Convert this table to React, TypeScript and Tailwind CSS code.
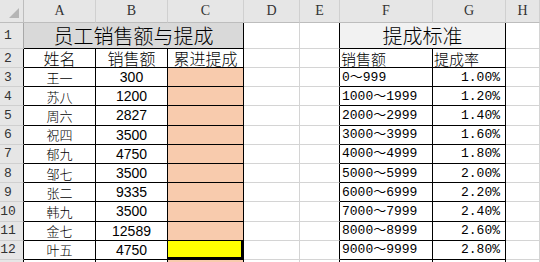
import React from 'react';

const rows = [
  { name: '王一', sales: '300', range: '0～999', rate: '1.00%' },
  { name: '苏八', sales: '1200', range: '1000～1999', rate: '1.20%' },
  { name: '周六', sales: '2827', range: '2000～2999', rate: '1.40%' },
  { name: '祝四', sales: '3500', range: '3000～3999', rate: '1.60%' },
  { name: '郁九', sales: '4750', range: '4000～4999', rate: '1.80%' },
  { name: '邹七', sales: '3500', range: '5000～5999', rate: '2.00%' },
  { name: '张二', sales: '9335', range: '6000～6999', rate: '2.20%' },
  { name: '韩九', sales: '3500', range: '7000～7999', rate: '2.40%' },
  { name: '金七', sales: '12589', range: '8000～8999', rate: '2.60%' },
  { name: '叶五', sales: '4750', range: '9000～9999', rate: '2.80%' },
];

const cjk = "font-['Noto_Sans_CJK_SC',sans-serif] font-light";
const mono = "font-['Liberation_Mono','Noto_Sans_CJK_SC',monospace]";
const sans = "font-['Liberation_Sans','Noto_Sans_CJK_SC',sans-serif]";

function Cell({ className = '', children }: { className?: string; children?: React.ReactNode }) {
  return (
    <div className={`flex items-center overflow-hidden whitespace-nowrap leading-none border-b border-r ${className}`}>
      {children}
    </div>
  );
}

function RowHead({ n, dark = true }: { n: number; dark?: boolean }) {
  return (
    <Cell
      className={`bg-[#e6e6e6] border-b-[#d0d0d0] ${dark ? 'border-r-black' : 'border-r-[#a8a8a8]'} justify-center pr-[7px] ${mono} text-[13px] text-[#333]`}
    >
      {n}
    </Cell>
  );
}

function ColHead({ label }: { label: string }) {
  return (
    <Cell className={`bg-[#e6e6e6] border-b-[#bdbdbd] border-r-[#d0d0d0] justify-center font-['Liberation_Serif',serif] text-[14px] text-[#333]`}>
      {label}
    </Cell>
  );
}

export default function App() {
  return (
    <div className="h-[262px] w-[540px] overflow-hidden bg-white text-black">
      <div className="grid grid-cols-[24px_72px_72px_76px_56px_40px_93px_73px_1fr] grid-rows-[23px_26px_19px_repeat(10,19.2px)_20px]">
        {/* column headers */}
        <Cell className="bg-[#e6e6e6] border-b-[#bdbdbd] border-r-[#bdbdbd]">
          <svg width="23" height="22" viewBox="0 0 23 22">
            <polygon points="19,8 19,18 9,18" fill="#b5b5b5" />
          </svg>
        </Cell>
        {['A', 'B', 'C', 'D', 'E', 'F', 'G', 'H'].map((c) => (
          <ColHead key={c} label={c} />
        ))}

        {/* row 1 */}
        <RowHead n={1} dark={false} />
        <Cell className={`col-span-3 justify-center bg-[#d9d9d9] border-b-black border-r-black ${cjk} text-[20px]`}>
          员工销售额与提成
        </Cell>
        <Cell className="border-[#d4d4d4]" />
        <Cell className="border-b-[#d4d4d4] border-r-black" />
        <Cell className={`col-span-2 justify-center bg-[#f2f2f2] border-black ${cjk} text-[20px]`}>提成标准</Cell>
        <Cell className="border-[#d4d4d4]" />

        {/* row 2 */}
        <RowHead n={2} />
        <Cell className={`justify-center border-black ${cjk} text-[16px]`}>姓名</Cell>
        <Cell className={`justify-center border-black ${cjk} text-[16px]`}>销售额</Cell>
        <Cell className={`justify-center border-black ${cjk} text-[16px]`}>累进提成</Cell>
        <Cell className="border-[#d4d4d4]" />
        <Cell className="border-b-[#d4d4d4] border-r-black" />
        <Cell className={`border-black pl-px ${cjk} text-[15px]`}>销售额</Cell>
        <Cell className={`border-black pl-px ${cjk} text-[15px]`}>提成率</Cell>
        <Cell className="border-[#d4d4d4]" />

        {/* data rows */}
        {rows.map((r, i) => (
          <React.Fragment key={r.name}>
            <RowHead n={i + 3} />
            <Cell className={`justify-center border-black ${cjk} text-[13px]`}>{r.name}</Cell>
            <Cell className={`justify-center border-black ${sans} text-[14px]`}>{r.sales}</Cell>
            {i === rows.length - 1 ? (
              <Cell className="relative bg-[#ffff00] border-black">
                <div className="absolute -left-[2px] -top-[2px] right-0 bottom-0 border-2 border-black" />
              </Cell>
            ) : (
              <Cell className="bg-[#f8cbad] border-black" />
            )}
            <Cell className="border-[#d4d4d4]" />
            <Cell className="border-b-[#d4d4d4] border-r-black" />
            <Cell className={`border-black pl-[2px] ${mono} text-[13px]`}>{r.range}</Cell>
            <Cell className={`justify-end border-black pr-[5px] ${mono} text-[13px]`}>{r.rate}</Cell>
            <Cell className="border-[#d4d4d4]" />
          </React.Fragment>
        ))}

        {/* row 13, mostly cut off */}
        <RowHead n={13} />
        <Cell className="border-black" />
        <Cell className="border-black" />
        <Cell className="bg-[#f8cbad] border-black" />
        <Cell className="border-[#d4d4d4]" />
        <Cell className="border-b-[#d4d4d4] border-r-black" />
        <Cell className="border-black" />
        <Cell className="border-black" />
        <Cell className="border-[#d4d4d4]" />
      </div>
    </div>
  );
}
